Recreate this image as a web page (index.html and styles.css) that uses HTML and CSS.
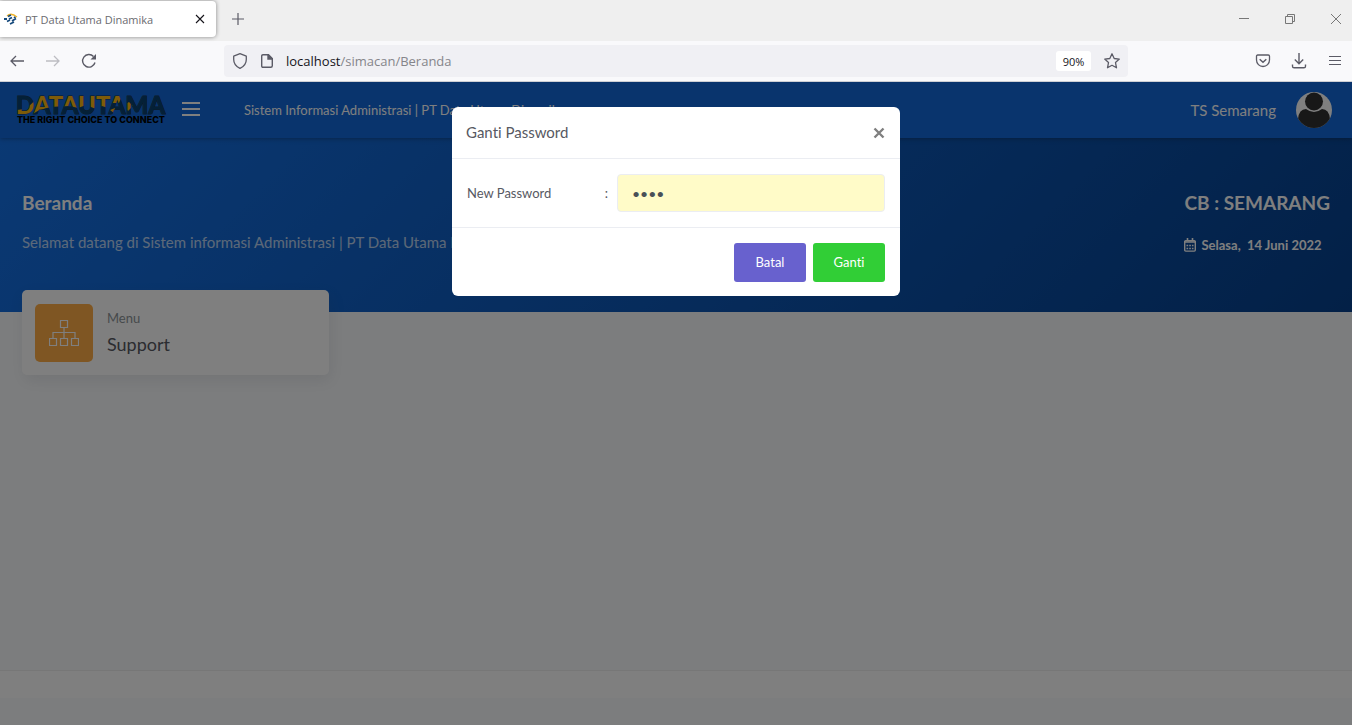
FILE: index.html
```html
<!DOCTYPE html>
<html lang="id">
<head>
<meta charset="utf-8">
<title>PT Data Utama Dinamika</title>
<link rel="stylesheet" href="styles.css">
</head>
<body>
<div class="browser">
  <div class="tabbar">
    <div class="tab">
      <svg class="favicon" width="14" height="14" viewBox="0 0 14 14" aria-hidden="true"><path d="M3 4Q7 0 13 5" fill="none" stroke="#f0b429" stroke-width="1.300"/><path d="M0 7h3M4 4.500l3-1.500M5 7l3-1.500M3 9.500l3-1.500M8 9l4-2.500M6 12l4-2M10 5l1.500 1" stroke="#174a7c" stroke-width="1.800"/></svg>
      <span class="tab-title">PT Data Utama Dinamika</span>
      <button class="icon-button tab-close" aria-label="Close tab"><svg width="10" height="10" viewBox="0 0 10 10"><path d="M1 1l8 8M9 1l-8 8" stroke="#15141a" stroke-width="1.1"/></svg></button>
    </div>
    <button class="icon-button tab-new" aria-label="New tab"><svg width="12" height="12" viewBox="0 0 12 12"><path d="M6 0v12M0 6h12" stroke="#5b5b66" stroke-width="1.2"/></svg></button>
    <div class="window-buttons">
      <button class="icon-button" aria-label="Minimize"><svg width="12" height="12" viewBox="0 0 12 12"><path d="M1 5.500h10" stroke="#777"/></svg></button>
      <button class="icon-button" aria-label="Restore"><svg width="12" height="12" viewBox="0 0 12 12" fill="none" stroke="#777"><path d="M1.500 3.500h7v7h-7zM3.500 3.500v-2h7v7h-2"/></svg></button>
      <button class="icon-button" aria-label="Close"><svg width="12" height="12" viewBox="0 0 12 12"><path d="M1 1l10 10M11 1L1 11" stroke="#777"/></svg></button>
    </div>
  </div>
  <div class="toolbar">
    <div class="tools">
      <button class="icon-button" aria-label="Back"><svg width="16" height="16" viewBox="0 0 16 16" fill="none" stroke="#5b5b66" stroke-width="1.3"><path d="M15 8H2M7 3L2 8l5 5"/></svg></button>
      <button class="icon-button" aria-label="Forward" disabled><svg width="16" height="16" viewBox="0 0 16 16" fill="none" stroke="#bdbdc2" stroke-width="1.3"><path d="M1 8h13M9 3l5 5-5 5"/></svg></button>
      <button class="icon-button" aria-label="Reload"><svg width="16" height="16" viewBox="0 0 16 16" fill="none" stroke="#5b5b66" stroke-width="1.4"><path d="M14 9.500A6.300 6.300 0 1 1 12.500 3.500"/><path d="M15 1v5.500H9.500z" fill="#5b5b66" stroke="none"/></svg></button>
    </div>
    <div class="urlbar">
      <svg width="16" height="16" viewBox="0 0 16 16" fill="none" stroke="#5b5b66" stroke-width="1.300" aria-hidden="true"><path d="M8 .7l6.300 2.500v3.300c0 4-2.300 7-6.300 8.900-4-1.900-6.300-4.900-6.300-8.900V3.200z" stroke-linejoin="round"/></svg>
      <svg width="12" height="14" viewBox="0 0 12 14" fill="none" stroke="#5b5b66" stroke-width="1.400" aria-hidden="true"><path d="M2 .7h5.500l3.800 3.800v7.300q0 1.500-1.500 1.500H2Q.7 13.300.7 12V2Q.7.7 2 .7z"/><path d="M7 1v4h4z" fill="#5b5b66"/></svg>
      <div class="url"><span class="url-host">localhost</span>/simacan/Beranda</div>
      <button class="zoom-level">90%</button>
      <button class="icon-button" aria-label="Bookmark this page"><svg width="16" height="16" viewBox="0 0 16 16" fill="none" stroke="#5b5b66" stroke-width="1.300" stroke-linejoin="round"><path d="M8 .8l2.200 4.700 5.100.6-3.800 3.500 1 5.200L8 12.300l-4.500 2.500 1-5.200L.7 6.100l5.100-.6z"/></svg></button>
    </div>
    <div class="tools">
      <button class="icon-button" aria-label="Save to Pocket"><svg width="16" height="16" viewBox="0 0 16 16" fill="none" stroke="#5b5b66" stroke-width="1.300"><path d="M2.700 2h10.600Q14.500 2 14.500 3.300V7a6.500 6.500 0 0 1-13 0V3.300Q1.500 2 2.700 2z"/><path d="M4.700 6.200L8 9.300l3.300-3.100" stroke-width="1.500"/></svg></button>
      <button class="icon-button" aria-label="Downloads"><svg width="16" height="16" viewBox="0 0 16 16" fill="none" stroke="#5b5b66" stroke-width="1.400"><path d="M8 0v10.500M3.800 6.500L8 10.700l4.200-4.200M1.500 11.500v1.700q0 1.600 1.600 1.600h9.800q1.600 0 1.600-1.600v-1.700"/></svg></button>
      <button class="icon-button" aria-label="Menu"><svg width="16" height="16" viewBox="0 0 16 16"><path d="M2 3.500h12M2 7.500h12M2 11.500h12" stroke="#5b5b66" stroke-width="1.200"/></svg></button>
    </div>
  </div>
</div>

<div class="viewport">
  <header class="navbar">
    <a class="brand" href="#" aria-label="Datautama">
      <svg class="brand-logo" width="152" height="28" viewBox="0 0 152 28">
        <defs>
          <pattern id="brand-fill" width="152" height="28" patternUnits="userSpaceOnUse">
            <path fill="#08406f" d="M0 0h152v28H0z"/>
            <path fill="#fdb713" d="M0 14Q13 14 22 0H106L103 7 96 7 92 12 86 10 80 13 70 9 62 12 54 10Q30 10 20 16 12 22 0 23zM108 9l5-3 4 4-5 5zM94 14l5-2-1 5z"/>
          </pattern>
        </defs>
        <text class="brand-name" x="0" y="18" fill="url(#brand-fill)">DATAUTAMA</text>
        <text class="brand-line" x="1" y="27">THE RIGHT CHOICE TO CONNECT</text>
      </svg>
    </a>
    <button class="icon-button sidebar-toggle" aria-label="Toggle sidebar"><svg width="18" height="16" viewBox="0 0 18 16"><path d="M0 1h18M0 7h18M0 13h18" stroke="#fff" stroke-width="2"/></svg></button>
    <span class="navbar-title">Sistem Informasi Administrasi | PT Data Utama Dinamika</span>
    <a class="user" href="#">TS Semarang
      <svg width="36" height="36" viewBox="0 0 36 36" aria-hidden="true"><defs><clipPath id="avatar"><circle cx="18" cy="18" r="18"/></clipPath></defs><g clip-path="url(#avatar)"><path fill="#fff" d="M0 0h36v36H0z"/><circle cx="18" cy="9.500" r="9" fill="#303030"/><path d="M2 27Q3 17 10 17q8 6 16 0 7 0 8 10v9H2z" fill="#303030"/></g></svg>
    </a>
  </header>
  <main class="content">
    <section class="banner">
      <div>
        <h1 class="banner-title">Beranda</h1>
        <p class="banner-text">Selamat datang di Sistem informasi Administrasi | PT Data Utama Dinamika</p>
      </div>
      <div class="branch">
        <h2 class="banner-title">CB : SEMARANG</h2>
        <p class="date"><svg width="12" height="14" viewBox="0 0 12 14" fill="none" stroke="#fff" aria-hidden="true"><rect x=".7" y="2.700" width="10.600" height="10.400" rx="1" stroke-width="1.400"/><path d="M0 4h12M3.500 0v3M8.500 0v3" stroke-width="1.600"/><path d="M2.500 7.500h7M2.500 10.500h7" stroke-width="1.700" stroke-dasharray="1.700 1"/></svg>Selasa,&nbsp; 14 Juni 2022</p>
      </div>
    </section>
    <a class="card" href="#">
      <span class="card-icon"><svg width="30" height="26" viewBox="0 0 30 26" fill="none" stroke="#fff" aria-hidden="true"><path d="M11.500.5h7v7h-7zM.5 18.500h7v7h-7zM11.500 18.500h7v7h-7zM22.500 18.500h7v7h-7zM15 7.500v11M4 18.500v-6h22v6" stroke-width="1.200"/></svg></span>
      <span class="card-body"><span class="card-category">Menu</span><span class="card-title">Support</span></span>
    </a>
  </main>
  <footer class="footer"></footer>

  <div class="backdrop">
    <form class="modal" role="dialog" aria-labelledby="modal-title">
      <div class="modal-header">
        <h3 class="modal-title" id="modal-title">Ganti Password</h3>
        <button type="button" class="icon-button" aria-label="Close dialog"><svg width="12" height="12" viewBox="0 0 12 12"><path d="M1.500 1.500l9 9M10.500 1.500l-9 9" stroke="#7f7f7f" stroke-width="2.400"/></svg></button>
      </div>
      <div class="modal-body">
        <label class="field-label" for="new-password"><span>New Password</span><span>:</span></label>
        <input class="field" id="new-password" type="password" value="1234">
      </div>
      <div class="modal-footer">
        <button type="button" class="button button-cancel">Batal</button>
        <button type="submit" class="button button-save">Ganti</button>
      </div>
    </form>
  </div>
</div>
</body>
</html>
```
FILE: styles.css
```css
* { box-sizing: border-box; }

body {
  display: flex;
  flex-direction: column;
  min-height: 100vh;
  margin: 0;
  font-family: Lato, "Liberation Sans", sans-serif;
  font-size: 13px;
  font-variant-ligatures: none;
  color: #575962;
}

h1, h2, h3, p { margin: 0; }
a { color: inherit; text-decoration: none; }
svg { display: block; flex: none; }
button, input { font: inherit; font-variant-ligatures: none; }

.icon-button {
  display: flex;
  padding: 0;
  border: 0;
  background: none;
}

/* Browser window */
.browser { font-family: "Open Sans", "Noto Sans", sans-serif; }

.tabbar {
  display: flex;
  align-items: center;
  height: 41px;
  padding-bottom: 3px;
  background: #efefef;
}

.tab {
  display: flex;
  align-items: center;
  width: 216px;
  height: 36px;
  padding: 0 11px 0 4px;
  gap: 7px;
  border-radius: 0 4px 4px 0;
  background: #fff;
  box-shadow: 0 0 4px rgba(0, 0, 0, .45);
  font-size: 11px;
  color: #6b6b70;
}

.tab-close { margin-left: auto; }
.tab-new { margin-left: 16px; }

.window-buttons {
  display: flex;
  gap: 34px;
  margin-left: auto;
  padding-right: 10px;
}

.toolbar {
  display: flex;
  justify-content: space-between;
  align-items: center;
  height: 41px;
  padding: 0 9px;
  border-bottom: 1px solid #cfcfd4;
  background: #f9f9fb;
}

.tools { display: flex; align-items: center; gap: 20px; }

.urlbar {
  display: flex;
  align-items: center;
  flex: 0 1 904px;
  height: 32px;
  margin: 0 16px;
  padding: 0 8px;
  gap: 13px;
  border-radius: 4px;
  background: #f0f0f4;
}

.url {
  flex: 1;
  font-size: 13px;
  color: #85858a;
}

.url-host { color: #15141a; }

.zoom-level {
  width: 35px;
  height: 20px;
  padding: 0;
  border: 0;
  border-radius: 3px;
  background: #fff;
  font-size: 11px;
  color: #15141a;
}

/* Page */
.viewport {
  position: relative;
  display: flex;
  flex: 1;
  flex-direction: column;
  padding-bottom: 27px;
  background: #f9fbfd;
}

.navbar {
  position: relative;
  display: flex;
  align-items: center;
  height: 56px;
  padding: 0 20px 0 16px;
  background: #1269db;
  box-shadow: 0 0 5px rgba(18, 23, 39, .5);
  clip-path: inset(0 0 -8px);
  color: #fff;
}

.brand-logo { overflow: visible; }
.brand-name { font-weight: 900; font-size: 24px; stroke: #1c3550; stroke-width: 1px; paint-order: stroke; }
.brand-line { font-family: Inter, Lato, sans-serif; font-weight: 800; font-size: 9px; }
.sidebar-toggle { margin-left: 14px; }
.navbar-title { margin-left: 44px; }

.user {
  display: flex;
  align-items: center;
  margin-left: auto;
  gap: 20px;
  font-size: 15px;
}

.content { flex: 1; }

.banner {
  display: flex;
  justify-content: space-between;
  height: 174px;
  padding: 51px 22px 0;
  background: linear-gradient(-45deg, #06418e, #1572e8);
  color: #fff;
}

.banner-title { font-size: 19px; line-height: 28px; }

.banner-text {
  margin-top: 13px;
  font-size: 15px;
  line-height: 24px;
  opacity: .7;
}

.date {
  display: flex;
  align-items: center;
  margin-top: 18px;
  gap: 5px;
  font-weight: 700;
  line-height: 20px;
}

.card {
  position: relative;
  display: flex;
  width: 307px;
  height: 85px;
  margin: -22px 22px 0;
  padding: 14px 13px;
  gap: 14px;
  border-radius: 5px;
  background: #fff;
  box-shadow: 2px 6px 15px rgba(69, 65, 78, .1);
}

.card-icon {
  display: grid;
  place-items: center;
  width: 58px;
  height: 58px;
  border-radius: 5px;
  background: #ffad46;
}

.card-body { display: flex; flex-direction: column; }
.card-category { line-height: 28px; color: #8d9498; }
.card-title { font-size: 18px; line-height: 24px; }

.footer {
  height: 28px;
  border-top: 1px solid #eee;
  background: #fff;
}

/* Dialog */
.backdrop {
  position: absolute;
  inset: 0;
  display: flex;
  justify-content: center;
  align-items: flex-start;
  padding: 25px 16px;
  background: rgba(0, 0, 0, .5);
}

.modal {
  flex: 0 1 448px;
  border-radius: 6px;
  background: #fff;
}

.modal-header {
  display: flex;
  justify-content: space-between;
  align-items: center;
  padding: 14px 15px 14px 14px;
  border-bottom: 1px solid #ebedf2;
}

.modal-title { font-size: 15px; font-weight: 400; line-height: 23px; }

.modal-body {
  display: flex;
  align-items: center;
  padding: 15px;
  gap: 9px;
}

.field-label {
  display: flex;
  justify-content: space-between;
  flex: 0 0 141px;
}

.field {
  flex: 1;
  min-width: 0;
  height: 38px;
  padding: 0 14px;
  border: 1px solid #ebedf2;
  border-radius: 4px;
  background: #fffbc8;
  font-size: 14px;
  color: #495057;
}

.modal-footer {
  display: flex;
  justify-content: flex-end;
  padding: 15px 15px 14px;
  gap: 7px;
  border-top: 1px solid #ebedf2;
}

.button {
  min-width: 72px;
  height: 39px;
  padding: 0 20px 1px;
  border: 0;
  border-radius: 3px;
  color: #fff;
}

.button-cancel { background: #6861ce; }
.button-save { background: #31ce36; }
```
